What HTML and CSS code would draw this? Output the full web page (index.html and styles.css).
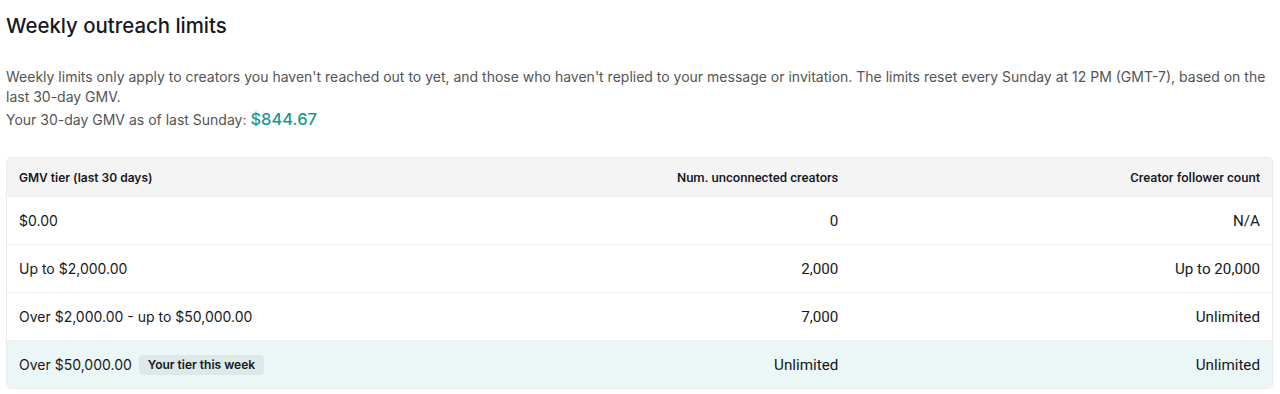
FILE: index.html
```html
<!DOCTYPE html>
<html lang="en">
<head>
    <meta charset="UTF-8">
    <meta name="viewport" content="width=device-width, initial-scale=1.0">
    <title>Weekly outreach limits</title>
    <link rel="stylesheet" href="styles.css">
</head>
<body>
    <div class="page">
        <h2 class="title">Weekly outreach limits</h2>
        <p class="desc">Weekly limits only apply to creators you haven't reached out to yet, and those who haven't replied to your message or invitation. The limits reset every Sunday at 12 PM (GMT-7), based on the last 30-day GMV.</p>
        <p class="gmv">Your 30-day GMV as of last Sunday: <span class="gmv-value">$844.67</span></p>

        <table class="limits">
            <thead>
                <tr>
                    <th>GMV tier (last 30 days)</th>
                    <th class="num">Num. unconnected creators</th>
                    <th class="num">Creator follower count</th>
                </tr>
            </thead>
            <tbody>
                <tr>
                    <td>$0.00</td>
                    <td class="num">0</td>
                    <td class="num">N/A</td>
                </tr>
                <tr>
                    <td>Up to $2,000.00</td>
                    <td class="num">2,000</td>
                    <td class="num">Up to 20,000</td>
                </tr>
                <tr>
                    <td>Over $2,000.00 - up to $50,000.00</td>
                    <td class="num">7,000</td>
                    <td class="num">Unlimited</td>
                </tr>
                <tr class="current">
                    <td>Over $50,000.00 <span class="badge">Your tier this week</span></td>
                    <td class="num">Unlimited</td>
                    <td class="num">Unlimited</td>
                </tr>
            </tbody>
        </table>
    </div>
</body>
</html>
```

FILE: styles.css
```css
body {
    margin: 0;
    font-family: 'Inter', 'Noto Sans', sans-serif;
    color: #161823;
    background: #fff;
}

.page {
    padding: 13px 7px 0 6px;
}

.title {
    margin: 0;
    font-size: 20.4px;
    font-weight: 500;
    line-height: 26px;
}

.desc {
    margin: 28px 0 0;
    font-size: 14px;
    line-height: 20px;
    color: #545454;
}

.gmv {
    margin: 1px 0 0;
    font-size: 14px;
    line-height: 22px;
    color: #545454;
}

.gmv-value {
    font-size: 16.5px;
    font-weight: 500;
    color: #1a9a8a;
}

.limits {
    width: 100%;
    margin-top: 26px;
    table-layout: fixed;
    border-collapse: separate;
    border-spacing: 0;
    border: 1px solid #ececec;
    border-radius: 5px;
    overflow: hidden;
    font-size: 14px;
}

.limits th {
    height: 38px;
    padding: 0 12px;
    background: #f4f4f4;
    font-size: 12px;
    font-weight: 600;
    text-align: left;
}

.limits td {
    height: 47px;
    padding: 0 12px;
    border-top: 1px solid #efefef;
}

.limits .num {
    text-align: right;
    font-family: 'Roboto', sans-serif;
    font-size: 15.2px;
}

.limits th.num {
    font-weight: 500;
    font-size: 13px;
}

.limits tr.current td {
    background: #ebf6f6;
}

.badge {
    display: inline-block;
    margin-left: 3px;
    padding: 2px 9px;
    border-radius: 4px;
    background: #dde8e8;
    font-size: 12px;
    font-weight: 600;
    line-height: 16px;
    vertical-align: 1px;
}
```
